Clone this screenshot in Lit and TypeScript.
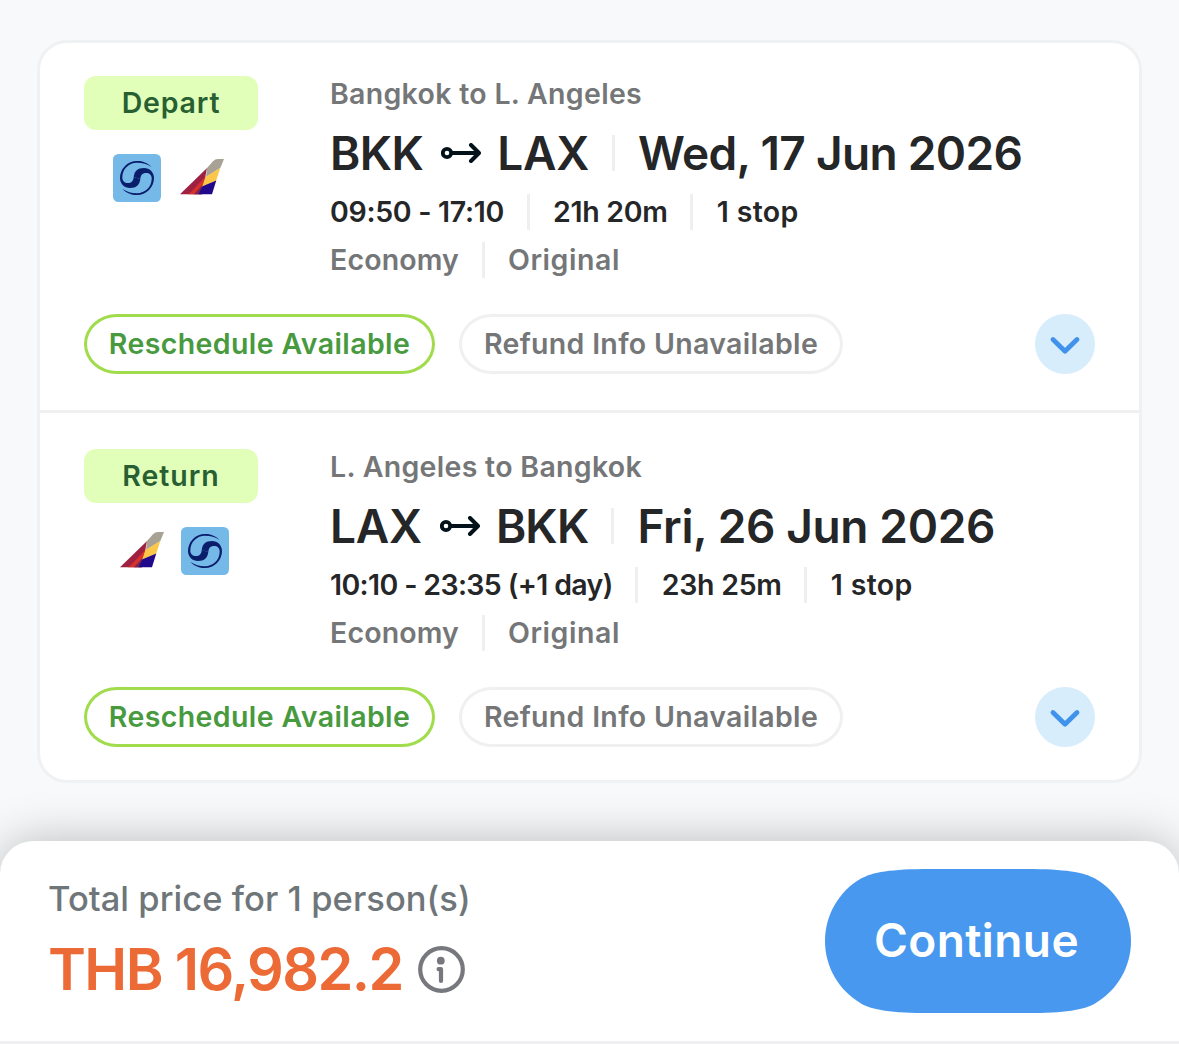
import { LitElement, html, css } from "lit";
import { customElement, property } from "lit/decorators.js";
import { styleMap } from "lit/directives/style-map.js";

/** A text run and its tracking in px. */
type Run = [text: string, tracking: number];

interface Flight {
  label: Run;
  airlines: ("korean" | "asiana")[];
  title: Run;
  from: Run;
  to: Run;
  date: Run;
  times: Run[];
}

const FLIGHTS: Flight[] = [
  {
    label: ["Depart", 0.8],
    airlines: ["korean", "asiana"],
    title: ["Bangkok to L. Angeles", 0.3],
    from: ["BKK", -0.6],
    to: ["LAX", -0.24],
    date: ["Wed, 17 Jun 2026", -0.68],
    times: [["09:50 - 17:10", -0.3], ["21h 20m", -0.28], ["1 stop", 0.35]],
  },
  {
    label: ["Return", 0.95],
    airlines: ["asiana", "korean"],
    title: ["L. Angeles to Bangkok", 0.3],
    from: ["LAX", -0.24],
    to: ["BKK", -0.83],
    date: ["Fri, 26 Jun 2026", -0.36],
    times: [["10:10 - 23:35 (+1 day)", -0.64], ["23h 25m", -0.25], ["1 stop", 0.35]],
  },
];

const CLASS_INFO: Run[] = [["Economy", 0.15], ["Original", 0.55]];

const run = ([text, tracking]: Run) =>
  html`<span style=${styleMap({ letterSpacing: `${tracking}px` })}>${text}</span>`;

const separated = (runs: Run[]) =>
  runs.map((r, i) => html`${i ? html`<i class="sep"></i>` : ""}${run(r)}`);

const SWIRL =
  "M38.5 13C34.5 8.7 29.5 7 24 7A17 17 0 0 0 7 24C7 30 11.5 34 17 34C23.5 34 26.5 31 27.3 25L20.7 23C20.3 27 18.5 29 15 29C11.5 29 9.3 27 9.3 23.5C9.3 15 16 8.8 24 8.8C30 8.8 34 10.2 38.5 13Z";

const koreanLogo = html`<svg class="logo" viewBox="0 0 48 48">
  <rect width="48" height="48" rx="5.5" fill="#74b9e8" />
  <path d=${SWIRL} fill="#0a1d6b" />
  <path d=${SWIRL} fill="#0a1d6b" transform="rotate(180 24 24)" />
</svg>`;

const asianaLogo = html`<svg class="tail" viewBox="0 0 44 36">
  <path d="M0 35.3L27 9L22 35.3Z" fill="#9f2142" />
  <path d="M11 33L26 17L22 28L19 35.3H8Z" fill="#d8312c" />
  <path d="M14 35.3L23 25.5L22 35.3Z" fill="#742650" />
  <path d="M27 9L33 2.2Q35 0 38 0H44L40.3 9L26 18Z" fill="#a8a294" />
  <path d="M40.3 9L36 22L22 28L25.5 18Z" fill="#fcc748" />
  <path d="M36.3 21.5L32 35.3H18.5L22.5 27.2Z" fill="#22088a" />
</svg>`;

@customElement("flight-segment")
class FlightSegment extends LitElement {
  @property({ attribute: false }) flight!: Flight;

  static styles = css`
    :host {
      display: block;
      padding: 36px 44px 33px 44px;
      color: #252627;
      font-size: 28.5px;
      font-weight: 580;
    }
    .top {
      display: flex;
      gap: 72px;
      height: 238px;
    }
    .side {
      width: 174px;
    }
    .tag {
      display: flex;
      justify-content: center;
      height: 54px;
      line-height: 53px;
      border-radius: 12px;
      background: #e1ffb9;
      color: #285f32;
      font-weight: 600;
    }
    .logos {
      display: flex;
      justify-content: center;
      gap: 20px;
      margin-top: 24px;
    }
    .slot {
      display: flex;
      align-items: center;
      width: 48px;
      height: 48px;
    }
    .logo {
      width: 48px;
      height: 48px;
    }
    .tail {
      flex: none;
      width: 44px;
      height: 36px;
      margin: 0 0 3px -1px;
    }
    .slot:first-child .tail {
      margin-left: 7px;
    }
    .row {
      display: flex;
      align-items: center;
      height: 48px;
      white-space: nowrap;
    }
    .row span {
      padding-bottom: 2px;
    }
    .title {
      height: 36px;
      color: #747678;
    }
    .route {
      height: 70px;
      padding-top: 6px;
      font-size: 46px;
      font-weight: 620;
    }
    .route span {
      padding-bottom: 1px;
    }
    .arrow {
      width: 40px;
      height: 20px;
      margin: 0 16px 0 18px;
    }
    .cabin {
      color: #747678;
    }
    .sep {
      width: 3px;
      height: 36px;
      margin: 0 23.5px 0 22.5px;
      background: #efefef;
    }
    .bottom {
      display: flex;
      align-items: center;
      gap: 24px;
    }
    .pill {
      box-sizing: border-box;
      display: flex;
      justify-content: center;
      align-items: center;
      width: 351px;
      height: 60px;
      padding-bottom: 2px;
      border: 3px solid #a0dc4b;
      border-radius: 33px / 30px;
      color: #489a3e;
      font-weight: 600;
    }
    .pill.muted {
      width: 384px;
      border-color: #f0f0f0;
      color: #747678;
    }
    .more {
      width: 60px;
      height: 60px;
      margin-left: auto;
    }
  `;

  render() {
    const f = this.flight;
    return html`
      <div class="top">
        <div class="side">
          <div class="tag">${run(f.label)}</div>
          <div class="logos">
            ${f.airlines.map((a) => html`<div class="slot">${a === "korean" ? koreanLogo : asianaLogo}</div>`)}
          </div>
        </div>
        <div>
          <div class="row title">${run(f.title)}</div>
          <div class="row route">
            ${run(f.from)}
            <svg class="arrow" viewBox="0 0 40 20" fill="none" stroke="#03121a" stroke-width="4" stroke-linecap="round" stroke-linejoin="round">
              <circle cx="6" cy="10" r="4.2" stroke-width="3.8" />
              <path d="M11 10H37.5M30 2L38 10L30 18" />
            </svg>
            ${run(f.to)}<i class="sep"></i>${run(f.date)}
          </div>
          <div class="row">${separated(f.times)}</div>
          <div class="row cabin">${separated(CLASS_INFO)}</div>
        </div>
      </div>
      <div class="bottom">
        <div class="pill">${run(["Reschedule Available", 0.4])}</div>
        <div class="pill muted">${run(["Refund Info Unavailable", 0.32])}</div>
        <svg class="more" viewBox="0 0 60 60">
          <circle cx="30" cy="30" r="30" fill="#d7edfc" />
          <path d="M18 25.5L30 37.3L42 25.5" fill="none" stroke="#4192ea" stroke-width="4.8" stroke-linecap="round" stroke-linejoin="round" />
        </svg>
      </div>
    `;
  }
}

@customElement("app-root")
class AppRoot extends LitElement {
  static styles = css`
    :host {
      box-sizing: border-box;
      display: flex;
      flex-direction: column;
      justify-content: space-between;
      height: 1044px;
      padding-top: 40px;
      overflow: hidden;
      background: #f7f9fb;
      font-family: Inter, "Noto Sans", sans-serif;
    }
    .card {
      margin: 0 37px;
      border: 3px solid #f0f1f2;
      border-radius: 30px;
      background: #fff;
    }
    flight-segment + flight-segment {
      border-top: 3px solid #f0f0f1;
    }
    flight-segment:first-child {
      margin-top: -3px;
      padding-bottom: 36px;
    }
    .footer {
      box-sizing: border-box;
      display: flex;
      justify-content: space-between;
      height: 203px;
      padding: 28px 48px 0 48px;
      border-bottom: 3px solid #f0f0f2;
      border-radius: 33px 33px 0 0;
      background: #fff;
      box-shadow: 0 0 48px rgba(0, 0, 0, 0.25);
    }
    .caption {
      height: 60px;
      line-height: 60px;
      color: #6f7679;
      font-size: 34.5px;
      font-weight: 450;
    }
    .price {
      display: flex;
      align-items: center;
      gap: 15px;
      height: 80px;
      color: #ec6a36;
      font-size: 57.5px;
      font-weight: 630;
      white-space: nowrap;
    }
    .info {
      width: 47px;
      height: 47px;
    }
    .continue {
      width: 306px;
      height: 144px;
      padding: 0 3px 2px 0;
      border: 0;
      background: #4798ee;
      clip-path: path("M0 72C0 46.3 13.7 22.5 36 9.6C46.9 3.3 66 0 105 0H201C240 0 259.1 3.3 270 9.6C292.3 22.5 306 46.3 306 72C306 97.7 292.3 121.5 270 134.4C259.1 140.7 240 144 201 144H105C66 144 46.9 140.7 36 134.4C13.7 121.5 0 97.7 0 72Z");
      color: #fff;
      font: 620 46px Inter, "Noto Sans", sans-serif;
    }
  `;

  render() {
    return html`
      <div class="card">${FLIGHTS.map((f) => html`<flight-segment .flight=${f}></flight-segment>`)}</div>
      <div class="footer">
        <div>
          <div class="caption">${run(["Total price for 1 person(s)", 0.05])}</div>
          <div class="price">
            ${run(["THB 16,982.2", -1.6])}
            <svg class="info" viewBox="0 0 47 47" fill="none" stroke="#76787d" stroke-linecap="round" stroke-linejoin="round">
              <circle cx="23.5" cy="23.5" r="21.3" stroke-width="4.2" />
              <circle cx="22.8" cy="14.7" r="3.9" fill="#76787d" stroke="none" />
              <path d="M20.6 23.2H23V35" stroke-width="4.2" />
            </svg>
          </div>
        </div>
        <button class="continue">${run(["Continue", 0.4])}</button>
      </div>
    `;
  }
}
